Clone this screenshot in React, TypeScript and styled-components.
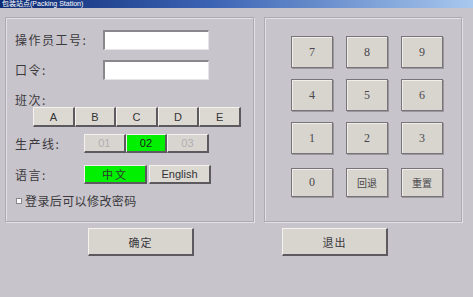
import styled, { createGlobalStyle } from 'styled-components'

const GlobalStyle = createGlobalStyle`
  html, body {
    margin: 0;
    padding: 0;
    background: #c8c4cb;
  }
  * {
    box-sizing: border-box;
  }
`

const shifts = ['A', 'B', 'C', 'D', 'E']
const lines = [
  { label: '01', on: false },
  { label: '02', on: true },
  { label: '03', on: false },
]
const keys = [
  ['7', '8', '9'],
  ['4', '5', '6'],
  ['1', '2', '3'],
  ['0', '回退', '重置'],
]

export default function App() {
  return (
    <Window>
      <GlobalStyle />
      <TitleBar>包装站点(Packing Station)</TitleBar>

      <Body>
        <LeftGroup>
          <FieldRow $top={12}>
            <Label $width={88}>操作员工号:</Label>
            <TextInput type="text" />
          </FieldRow>
          <FieldRow $top={10}>
            <Label $width={88}>口令:</Label>
            <TextInput type="password" />
          </FieldRow>

          <ShiftLabel>班次:</ShiftLabel>
          <ShiftRow>
            {shifts.map((s) => (
              <ShiftButton key={s} type="button">
                {s}
              </ShiftButton>
            ))}
          </ShiftRow>

          <FieldRow $top={7}>
            <Label $width={69}>生产线:</Label>
            <Segments>
              {lines.map((l) => (
                <LineButton key={l.label} type="button" $on={l.on}>
                  {l.label}
                </LineButton>
              ))}
            </Segments>
          </FieldRow>

          <FieldRow $top={12}>
            <Label $width={69}>语言:</Label>
            <LangGroup>
              <LangButton type="button" $on>
                中文
              </LangButton>
              <LangButton type="button">English</LangButton>
            </LangGroup>
          </FieldRow>

          <CheckRow>
            <CheckBox />
            <CheckText>登录后可以修改密码</CheckText>
          </CheckRow>
        </LeftGroup>

        <RightGroup>
          <Keypad>
            {keys.flat().map((k, i) => (
              <KeyButton key={k} type="button" $last={i >= 9} $cjk={k.length > 1}>
                {k}
              </KeyButton>
            ))}
          </Keypad>
        </RightGroup>
      </Body>

      <Actions>
        <ActionButton type="button">确定</ActionButton>
        <ActionButton type="button">退出</ActionButton>
      </Actions>
    </Window>
  )
}

const Window = styled.div`
  width: 473px;
  height: 297px;
  overflow: hidden;
  background: #c8c4cb;
  display: flex;
  flex-direction: column;
  font-family: 'Noto Sans CJK SC', 'Liberation Sans', sans-serif;
`

const TitleBar = styled.div`
  height: 8px;
  padding-left: 2px;
  background: linear-gradient(90deg, #0d2a72 0%, #3c64b4 45%, #a8c8ee 100%);
  color: #ffffff;
  font-family: 'Liberation Sans', 'Noto Sans CJK SC', sans-serif;
  font-size: 7px;
  line-height: 8px;
  white-space: nowrap;
`

const Body = styled.div`
  display: flex;
  gap: 10px;
  padding: 9px 0 0 5px;
`

const groupBox = `
  height: 205px;
  border: 1px solid #aeaab3;
  box-shadow: inset 1px 1px 0 #e2e0e6, 1px 1px 0 #e2e0e6;
`

const LeftGroup = styled.section`
  ${groupBox}
  width: 249px;
  display: flex;
  flex-direction: column;
  padding-left: 9px;
`

const RightGroup = styled.section`
  ${groupBox}
  width: 198px;
  padding: 18px 0 0 26px;
`

const FieldRow = styled.div<{ $top: number }>`
  display: flex;
  align-items: center;
  margin-top: ${({ $top }) => $top}px;
`

const Label = styled.span<{ $width: number }>`
  width: ${({ $width }) => $width}px;
  flex: 0 0 auto;
  color: #3a393c;
  font-size: 12px;
  letter-spacing: 1.5px;
  line-height: 16px;
`

const TextInput = styled.input`
  width: 106px;
  height: 20px;
  margin: 0;
  padding: 0 3px;
  background: #ffffff;
  border-style: solid;
  border-width: 2px 1px 1px 2px;
  border-color: #8a878d #e6e4e8 #e6e4e8 #8a878d;
  outline: none;
`

const ShiftLabel = styled.span`
  margin-top: 13px;
  color: #3a393c;
  font-size: 12px;
  letter-spacing: 1.5px;
  line-height: 14px;
`

const ShiftRow = styled.div`
  display: flex;
  margin-left: 18px;
`

const raisedButton = `
  margin: 0;
  padding: 0;
  border-style: solid;
  border-width: 1px 2px 2px 1px;
  border-color: #f4f2ee #5c5a5e #5c5a5e #f4f2ee;
  font-family: 'Liberation Sans', 'Noto Sans CJK SC', sans-serif;
  cursor: pointer;
`

const ShiftButton = styled.button`
  ${raisedButton}
  width: 41.6px;
  height: 20px;
  background: #dcd9d3;
  color: #333333;
  font-size: 11px;
`

const Segments = styled.div`
  display: flex;
`

const LineButton = styled.button<{ $on?: boolean }>`
  ${raisedButton}
  width: 41.6px;
  height: 19px;
  background: ${({ $on }) => ($on ? '#00f000' : '#d8d5d0')};
  color: ${({ $on }) => ($on ? '#1a1a1a' : '#b0aeb0')};
  font-size: 11px;
`

const LangGroup = styled.div`
  display: flex;
  gap: 2px;
`

const LangButton = styled.button<{ $on?: boolean }>`
  ${raisedButton}
  width: ${({ $on }) => ($on ? 63 : 62)}px;
  height: 19px;
  background: ${({ $on }) => ($on ? '#00f000' : '#dcd9d3')};
  color: #333333;
  font-family: ${({ $on }) =>
    $on ? "'Noto Sans CJK SC', sans-serif" : "'Liberation Sans', sans-serif"};
  font-size: 11px;
  letter-spacing: ${({ $on }) => ($on ? '2px' : '0')};
`

const CheckRow = styled.div`
  display: flex;
  align-items: center;
  gap: 3px;
  margin-top: 9px;
  margin-left: 1px;
`

const CheckBox = styled.span`
  width: 6px;
  height: 6px;
  background: #ffffff;
  border: 1px solid #8a878d;
`

const CheckText = styled.span`
  color: #3a393c;
  font-size: 12px;
  letter-spacing: 0.4px;
  line-height: 16px;
`

const Keypad = styled.div`
  display: grid;
  grid-template-columns: repeat(3, 42px);
  grid-auto-rows: 32px;
  column-gap: 13px;
  row-gap: 11px;
`

const KeyButton = styled.button<{ $last?: boolean; $cjk?: boolean }>`
  margin: ${({ $last }) => ($last ? '3px 0 0' : '0')};
  padding: 0;
  background: #d8d5cf;
  border: 1px solid #77747a;
  box-shadow: inset 1px 1px 0 #f0eeea, 1px 1px 0 #9a979c;
  color: #4a484c;
  font-family: ${({ $cjk }) =>
    $cjk ? "'Noto Sans CJK SC', serif" : "'Liberation Serif', serif"};
  font-size: ${({ $cjk }) => ($cjk ? '10px' : '12px')};
  cursor: pointer;
`

const Actions = styled.div`
  display: flex;
  gap: 88px;
  padding: 6px 0 0 88px;
`

const ActionButton = styled.button`
  ${raisedButton}
  width: 106px;
  height: 28px;
  background: #d8d5cf;
  color: #3a383c;
  font-family: 'Noto Sans CJK SC', serif;
  font-size: 11px;
  letter-spacing: 1px;
`
